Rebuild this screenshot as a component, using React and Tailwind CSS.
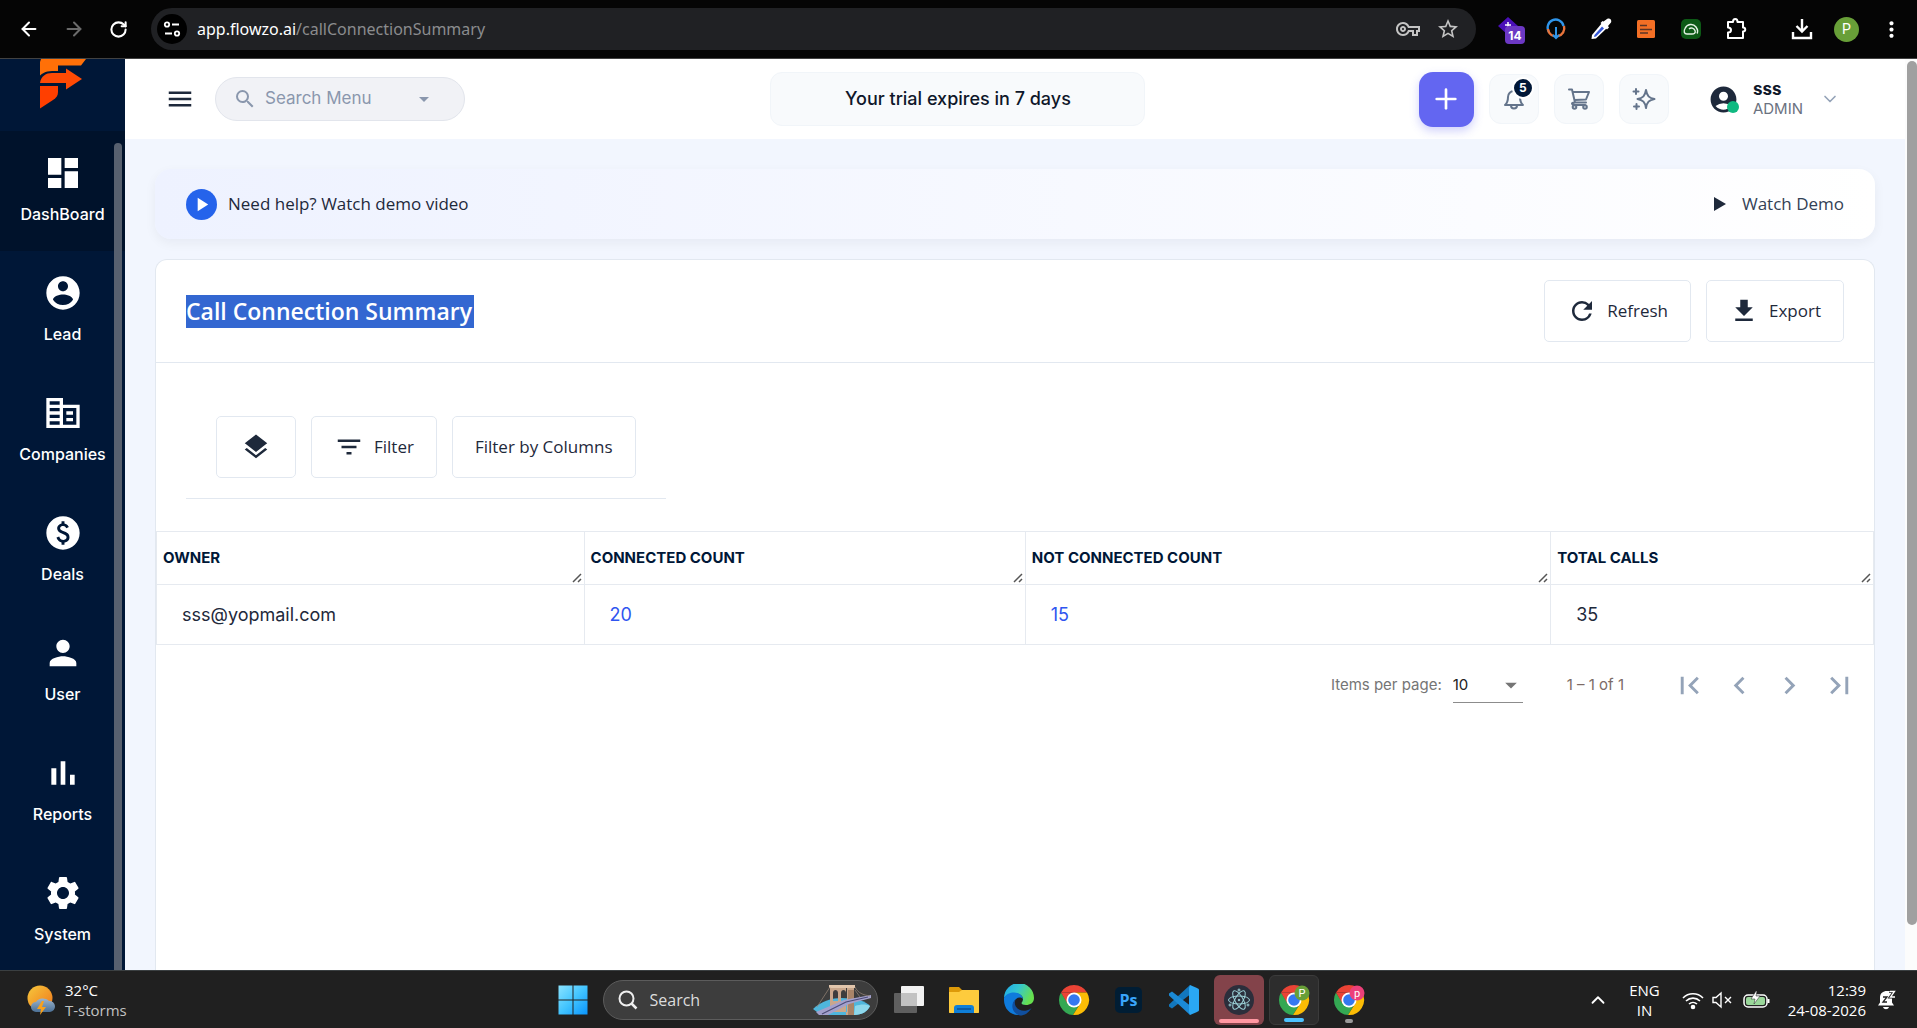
import React, { useState } from 'react';
import {
  MdArrowDropDown,
  MdChevronLeft,
  MdChevronRight,
  MdCorporateFare,
  MdDashboard,
  MdFilterList,
  MdFirstPage,
  MdGetApp,
  MdLastPage,
  MdLayers,
  MdMenu,
  MdMoreVert,
  MdOutlineVpnKey,
  MdPaid,
  MdPerson,
  MdPlayArrow,
  MdAccountCircle,
  MdRefresh,
  MdSearch,
  MdSettings,
  MdStarBorder,
} from 'react-icons/md';
import { ArrowLeft, ArrowRight, ChevronDown, ChevronUp, Plus, RotateCw } from 'lucide-react';

const LeadIcon = ({ size }) => (
  <svg width={size} height={size} viewBox="0 0 24 24" fill="currentColor">
    <path d="M12 2C6.48 2 2 6.48 2 12s4.48 10 10 10 10-4.48 10-10S17.52 2 12 2zm0 3c1.66 0 3 1.34 3 3s-1.34 3-3 3-3-1.34-3-3 1.34-3 3-3zm0 14.2c-2.5 0-4.71-1.28-6-3.22.03-1.99 4-3.08 6-3.08 1.99 0 5.97 1.09 6 3.08-1.29 1.94-3.5 3.22-6 3.22z" />
  </svg>
);

const ReportsIcon = ({ size }) => (
  <svg width={size} height={size} viewBox="0 0 24 24" fill="currentColor">
    <path d="M5 9.2h3V19H5zM10.6 5h2.8v14h-2.8zM16.200 13H19v6h-2.800z" />
  </svg>
);

const navItems = [
  { label: 'DashBoard', icon: MdDashboard, active: true },
  { label: 'Lead', icon: LeadIcon },
  { label: 'Companies', icon: MdCorporateFare },
  { label: 'Deals', icon: MdPaid },
  { label: 'User', icon: MdPerson },
  { label: 'Reports', icon: ReportsIcon },
  { label: 'System', icon: MdSettings },
];

const columns = [
  { label: 'OWNER', width: 'w-[24.9%]' },
  { label: 'CONNECTED COUNT', width: 'w-[25.7%]' },
  { label: 'NOT CONNECTED COUNT', width: 'w-[30.6%]' },
  { label: 'TOTAL CALLS', width: 'w-[18.8%]' },
];

const rows = [{ owner: 'sss@yopmail.com', connected: 20, notConnected: 15, total: 35 }];

const BarCell = ({ label, children }) => (
  <button aria-label={label} className="flex h-[42px] w-[45px] items-center justify-center">
    {children}
  </button>
);

const BrowserBar = () => (
  <div className="flex h-[59px] shrink-0 items-start border-b border-[#424242] bg-[#050505] pt-2 pr-[3px] pl-1.5 text-white">
    <BarCell label="Back"><ArrowLeft size={22} strokeWidth={2.2} /></BarCell>
    <BarCell label="Forward"><ArrowRight size={22} strokeWidth={2.2} className="text-[#6b6b6b]" /></BarCell>
    <BarCell label="Reload"><RotateCw size={19} strokeWidth={2.6} /></BarCell>
    <div className="mr-3 ml-2.5 flex h-[42px] flex-1 items-center rounded-full bg-[#202124] pl-1.5">
      <span className="flex size-[30px] items-center justify-center rounded-full bg-black">
        <svg width="18" height="18" viewBox="0 0 18 18" fill="none" stroke="#fff" strokeWidth="1.8">
          <circle cx="4" cy="4.5" r="2.2" />
          <path d="M9 4.5h7M2 13.5h7" />
          <circle cx="14" cy="13.5" r="2.2" />
        </svg>
      </span>
      <span className="ml-2.5 flex-1 font-['Noto_Sans',sans-serif] text-base text-[#8b8c8e]">
        <span className="text-white">app.flowzo.ai</span>/callConnectionSummary
      </span>
      <div className="flex gap-4 pr-4 text-[#c4c4c4]">
        <MdOutlineVpnKey size={24} />
        <MdStarBorder size={24} />
      </div>
    </div>
    <BarCell label="Tasks">
      <svg width="30" height="30" viewBox="0 0 30 30">
        <path d="M12 3l10 9-10 9-10-9z" fill="#4a0fb8" />
        <path d="M9 11h6M12 8v5" stroke="#fff" strokeWidth="1.5" />
        <rect x="9" y="12" width="20" height="18" rx="4" fill="#6c38c4" />
        <text x="19" y="26" textAnchor="middle" fontSize="12" fontWeight="700" fontFamily="Inter, sans-serif" fill="#fff">14</text>
      </svg>
    </BarCell>
    <BarCell label="Downloader">
      <svg width="22" height="22" viewBox="0 0 22 22" fill="none" strokeWidth="2.4">
        <path d="M4 14A8 8 0 1 1 18.500 8" stroke="#2f95ea" />
        <path d="M19 8a8 8 0 0 1-6 10M3 11a8 8 0 0 0 6 7" stroke="#e8743b" />
        <path d="M11 9v11M8 17l3 3 3-3" stroke="#2f95ea" strokeWidth="2" />
      </svg>
    </BarCell>
    <BarCell label="Color picker">
      <svg width="22" height="22" viewBox="0 0 22 22">
        <path d="M12 5l5 5L6 20.500 1.500 21 2 17z" fill="#fff" />
        <path d="M12 8.500l2 2-8 8-2 .5.500-2z" fill="#3558d8" />
        <path d="M13.500 3.500L17 1c3-1.500 5 1 4 3.500l-3 3.500 1 1.500-2 2-6.500-6.500 2-2z" fill="#fff" />
      </svg>
    </BarCell>
    <BarCell label="Notes">
      <svg width="18" height="18" viewBox="0 0 18 18">
        <rect width="18" height="18" rx="1.500" fill="#f36f25" />
        <path d="M3 5.500h7M3 9.500h12M3 13h8" stroke="#5a3426" strokeWidth="1.400" />
      </svg>
    </BarCell>
    <BarCell label="Mail tracker">
      <svg width="20" height="20" viewBox="0 0 20 20" fill="none" stroke="#e6f4e6" strokeWidth="1.400">
        <rect width="20" height="20" rx="5" fill="#0d5a16" stroke="none" />
        <path d="M8 10c2-2 5-1 6 1.500s-1 3.500-3 3.500H6c-3 0-3.500-3-2-5.500C6 5 12 4 15 8c2 3 2 5 1 6.500" />
      </svg>
    </BarCell>
    <BarCell label="Extensions">
      <svg width="22" height="22" viewBox="0 0 22 22" fill="none" stroke="#fff" strokeWidth="2" strokeLinejoin="round">
        <path d="M3 4h5c0-4 4.500-4 4.500 0H18v5.500c3 0 3 4 0 4V20H3v-5.500c4 0 4-5 0-5z" />
      </svg>
    </BarCell>
    <div className="w-[21px]" />
    <BarCell label="Downloads">
      <svg width="22" height="22" viewBox="0 0 22 22" fill="none" stroke="#fff" strokeWidth="2.400">
        <path d="M11 1v12M5.500 8l5.500 5.500L16.500 8M2 14v6h18v-6" />
      </svg>
    </BarCell>
    <BarCell label="Profile">
      <span className="flex size-[25px] items-center justify-center rounded-full bg-[#689f38] font-['Roboto',sans-serif] text-sm">P</span>
    </BarCell>
    <BarCell label="Menu"><MdMoreVert size={25} /></BarCell>
  </div>
);

const Sidebar = () => (
  <aside className="relative flex w-[125px] shrink-0 flex-col overflow-hidden bg-[#001737] text-white">
    <div className="flex h-[72px] shrink-0 items-start pl-[39px]">
      <svg width="47" height="50" viewBox="0 0 47 50">
        <path d="M2 0h45l-5 6.500H19V12c-9 0-13 0-18 4.500V3z" fill="#ff7008" />
        <path d="M1 24c1-7 6-10 12-10h14V9.500l16 10.500-16 10.500V24z" fill="#ff4a04" />
        <path d="M1 27h18v6c0 4-2 6-5 8L1 49.500z" fill="#ff3f00" />
      </svg>
    </div>
    <nav className="flex flex-col">
      {navItems.map(({ label, icon: Icon, active }) => (
        <a
          key={label}
          href="#"
          className={`flex h-[120px] flex-col items-center gap-[9px] pt-[22px] ${active ? 'bg-[#00122b]' : ''}`}
        >
          <Icon size={40} />
          <span className="text-base leading-6 font-medium">{label}</span>
        </a>
      ))}
    </nav>
    <div className="absolute top-[84px] right-[3px] -bottom-4 w-2 rounded-full bg-[#57606f]" />
  </aside>
);

const HeaderIcon = ({ label, children }) => (
  <button
    aria-label={label}
    className="relative flex size-[50px] items-center justify-center rounded-xl border border-[#f1f5f9] bg-[#f8fafc] text-[#64748b]"
  >
    <svg width="24" height="24" viewBox="0 0 24 24" fill="none" stroke="currentColor" strokeWidth="2" strokeLinecap="round" strokeLinejoin="round">
      {children}
    </svg>
    {label === 'Notifications' && (
      <span className="absolute top-0.5 right-1 flex size-[22px] items-center justify-center rounded-full border-2 border-white bg-[#001737] text-xs font-bold text-white">
        5
      </span>
    )}
  </button>
);

const Header = () => (
  <header className="flex h-20 shrink-0 items-center justify-between bg-white pr-[65px] pl-10">
    <div className="flex items-center gap-5">
      <button aria-label="Toggle menu" className="text-[#1e293b]"><MdMenu size={30} /></button>
      <div className="flex h-11 w-[250px] items-center rounded-full border border-[#e2e5ec] bg-[#f1f2f6] pr-7 pl-[17px] text-[#8a97ad]">
        <MdSearch size={24} className="shrink-0" />
        <input aria-label="Search Menu" placeholder="Search Menu" className="ml-2 w-full min-w-0 bg-transparent text-[17px] outline-none placeholder:text-[#8a97ad]" />
        <MdArrowDropDown size={24} className="shrink-0" />
      </div>
    </div>
    <div className="ml-8 flex h-[54px] w-[375px] items-center justify-center rounded-xl border border-[#f1f5f9] bg-[#f8fafc] text-lg font-medium text-[#0f172a]">
      Your trial expires in 7 days
    </div>
    <div className="flex items-center gap-[15px]">
      <button aria-label="Add" className="flex size-[55px] items-center justify-center rounded-[14px] bg-[#6366f1] text-white shadow-[0_4px_10px_rgba(99,102,241,0.3)]">
        <Plus size={32} strokeWidth={2} />
      </button>
      <HeaderIcon label="Notifications">
        <path d="M3 18c2.500-2 3-4 3-8a6 6 0 0 1 12 0c0 4 .5 6 3 8zM9 18.500c0 4 6 4 6 0" />
      </HeaderIcon>
      <HeaderIcon label="Cart">
        <path d="M2 2.500h3l3 13h11M6 5h16l-3 7.500-11 .5M8 15.500c-4 0-4 2 0 2.500h10" />
        <circle cx="7.500" cy="20" r="1.800" />
        <circle cx="18" cy="20" r="1.800" />
      </HeaderIcon>
      <HeaderIcon label="Assistant">
        <path d="M14 3c1 6 3 8 8.500 9-5.500 1-7.500 3-8.500 9-1-6-3-8-8.500-9C11 11 13 9 14 3zM4 2v5M1.500 4.500h5M4.500 17v5M2 19.500h5" />
      </HeaderIcon>
      <button className="ml-6 flex items-center text-left">
        <span className="relative text-[#1e293b]">
          <MdAccountCircle size={31} />
          <span className="absolute right-0 bottom-0.5 size-3 rounded-full bg-[#10b981]" />
        </span>
        <span className="ml-3.5 flex flex-col">
          <span className="text-[17px] leading-5 font-bold text-[#0f172a]">sss</span>
          <span className="text-[15px] leading-5 text-[#6b7280]">ADMIN</span>
        </span>
        <ChevronDown size={20} className="ml-[17px] text-[#94a3b8]" />
      </button>
    </div>
  </header>
);

const DemoBanner = () => (
  <section className="flex h-[70px] shrink-0 items-center justify-between rounded-2xl bg-linear-to-r from-[#eef2ff] to-white px-[31px] font-['Open_Sans',sans-serif] text-[17px] shadow-[0_4px_12px_rgba(15,23,42,0.05)]">
    <div className="flex items-center gap-[11px] font-medium text-[#1e293b]">
      <span className="flex size-[31px] items-center justify-center rounded-full bg-[#2563eb] text-white">
        <MdPlayArrow size={23} />
      </span>
      Need help? Watch demo video
    </div>
    <a href="#" className="flex items-center gap-4 text-[#334155]">
      <svg width="12" height="14" viewBox="0 0 12 14" fill="#1e293b"><path d="M0 0l12 7-12 7z" /></svg>
      Watch Demo
    </a>
  </section>
);

const OutlineButton = ({ icon: Icon, label, children }) => (
  <button
    aria-label={label}
    className={`flex h-[62px] items-center gap-2.5 rounded-[5px] border border-[#e2e8f0] bg-white font-['Open_Sans',sans-serif] text-[17px] font-medium text-[#1e293b] ${children ? 'px-[22px]' : 'px-6'}`}
  >
    {Icon && <Icon size={30} />}
    {children}
  </button>
);

const CallTable = () => (
  <table className="w-full table-fixed border-collapse text-left">
    <thead>
      <tr>
        {columns.map(({ label, width }) => (
          <th key={label} className={`${width} relative h-[53px] border border-[#e6eaf0] px-1.5 text-[15px] font-bold text-[#001737]`}>
            {label}
            <svg width="11" height="11" viewBox="0 0 11 11" className="absolute right-px bottom-px" stroke="#555" strokeWidth="1.500">
              <path d="M1 10l8-8M6 10l3-3" />
            </svg>
          </th>
        ))}
      </tr>
    </thead>
    <tbody className="text-lg text-[#1e293b]">
      {rows.map((row) => (
        <tr key={row.owner}>
          <td className="h-[60px] border border-[#e6eaf0] px-[25px]">{row.owner}</td>
          <td className="border border-[#e6eaf0] px-[25px]"><a href="#" className="text-[#2f55f0]">{row.connected}</a></td>
          <td className="border border-[#e6eaf0] px-[25px]"><a href="#" className="text-[#2f55f0]">{row.notConnected}</a></td>
          <td className="border border-[#e6eaf0] px-[25px]">{row.total}</td>
        </tr>
      ))}
    </tbody>
  </table>
);

const Paginator = () => {
  const [pageSize, setPageSize] = useState('10');

  return (
    <div className="flex h-[81px] items-center justify-end pr-2.5 text-[15px] text-[#757575]">
      <label htmlFor="page-size">Items per page:</label>
      <div className="relative mr-11 ml-[11px] flex h-[34px] w-[70px] items-center border-b border-[#8c8c8c] text-[#212121]">
        <select
          id="page-size"
          value={pageSize}
          onChange={(e) => setPageSize(e.target.value)}
          className="w-full appearance-none bg-transparent outline-none"
        >
          <option>10</option>
          <option>25</option>
          <option>50</option>
        </select>
        <MdArrowDropDown size={28} className="pointer-events-none absolute -right-0.5 text-[#757575]" />
      </div>
      <span className="mr-10 text-[#7d6b66]">1 – 1 of 1</span>
      {[['First page', MdFirstPage], ['Previous page', MdChevronLeft], ['Next page', MdChevronRight], ['Last page', MdLastPage]].map(([label, Icon]) => (
        <button key={label} aria-label={label} className="flex size-[50px] items-center justify-center text-[#94a3b8]">
          <Icon size={35} />
        </button>
      ))}
    </div>
  );
};

const SummaryCard = () => (
  <section className="min-h-0 flex-1 overflow-hidden rounded-t-xl border border-b-0 border-[#e2e8f0] bg-white">
    <div className="flex h-[103px] items-center justify-between border-b border-[#e2e8f0] px-[30px]">
      <h1 className="bg-[#3367d1] pr-0.5 font-['Open_Sans',sans-serif] text-[23px] leading-[33px] font-semibold text-white">
        Call Connection Summary
      </h1>
      <div className="flex gap-[15px]">
        <OutlineButton icon={MdRefresh}>Refresh</OutlineButton>
        <OutlineButton icon={MdGetApp}>Export</OutlineButton>
      </div>
    </div>
    <div className="mb-8 ml-[30px] inline-flex gap-[15px] border-b border-[#e2e8f0] px-[30px] pt-[53px] pb-5">
      <OutlineButton icon={MdLayers} label="Group" />
      <OutlineButton icon={MdFilterList}>Filter</OutlineButton>
      <OutlineButton>Filter by Columns</OutlineButton>
    </div>
    <CallTable />
    <Paginator />
  </section>
);

const ChromeIcon = ({ badge, color }) => (
  <svg width="32" height="32" viewBox="0 0 32 32">
    <path d="M3 8.500A15 15 0 0 1 29 8.500H16z" fill="#ea4335" />
    <path d="M3 8.500A15 15 0 0 0 15 31l7-11.500H10z" fill="#34a853" />
    <path d="M29 8.500A15 15 0 0 1 15 31l7.500-12L16 8.500z" fill="#fbbc05" />
    <path d="M3 8.500h16L9.500 19.500z" fill="#ea4335" />
    <circle cx="16" cy="16" r="7.500" fill="#fff" />
    <circle cx="16" cy="16" r="5.800" fill="#3478f0" />
    {badge && <circle cx="24" cy="9" r="7.500" fill={color} />}
    {badge && <text x="24" y="13" textAnchor="middle" fontSize="11" fontFamily="Roboto" fill="#fff">{badge}</text>}
  </svg>
);

const TaskTile = ({ label, className = '', bar, children }) => (
  <button aria-label={label} className={`relative flex size-[50px] items-center justify-center rounded-md ${className}`}>
    {children}
    {bar && <span className={`absolute bottom-0.5 h-1 rounded-full ${bar}`} />}
  </button>
);

const Taskbar = () => (
  <footer className="grid h-[58px] shrink-0 grid-cols-[1fr_auto_1fr] items-center border-t border-[#3a3f41] bg-[#202020] font-['Open_Sans',sans-serif] text-[15px] leading-5 text-white">
    <div className="flex items-center gap-[9px] pl-[26px]">
      <svg width="30" height="32" viewBox="0 0 30 32">
        <defs>
          <linearGradient id="sun" x1="0" y1="0" x2="1" y2="1">
            <stop offset="0" stopColor="#f6c83c" />
            <stop offset="1" stopColor="#f0761a" />
          </linearGradient>
          <linearGradient id="cloud" x1="0" y1="0" x2="0" y2="1">
            <stop offset="0" stopColor="#9db4cb" />
            <stop offset="1" stopColor="#4b7096" />
          </linearGradient>
        </defs>
        <circle cx="14" cy="14" r="12.500" fill="url(#sun)" />
        <path d="M10 28a5 5 0 0 1 0-10 8 7 0 0 1 13-1 5.500 5.500 0 0 1 1 11z" fill="url(#cloud)" />
        <path d="M16 17l-5 8h4l-1 6 6-8h-4l2-6z" fill="#f9a11b" />
      </svg>
      <div>
        <div>32°C</div>
        <div className="text-[#c3c3c3]">T-storms</div>
      </div>
    </div>

    <div className="flex items-center gap-[5px] pl-1">
      <TaskTile label="Start">
        <svg width="30" height="30" viewBox="0 0 30 30">
          <defs>
            <linearGradient id="win" x1="0" y1="0" x2="1" y2="1">
              <stop offset="0" stopColor="#8be4ff" />
              <stop offset="0.5" stopColor="#42c4ff" />
              <stop offset="1" stopColor="#0a94fb" />
            </linearGradient>
          </defs>
          <path d="M.5.5h14v14H.5zM15.500.5h14v14h-14zM.5 15.500h14v14H.5zM15.500 15.500h14v14h-14z" fill="url(#win)" />
        </svg>
      </TaskTile>
      <div className="mr-px flex h-10 w-[275px] items-center overflow-hidden rounded-full border border-[#5c5c5c] bg-[#3d3d3d] pr-1.5 pl-3.5">
        <svg width="20" height="20" viewBox="0 0 20 20" fill="none" stroke="#eee" strokeWidth="2" className="shrink-0">
          <circle cx="8.500" cy="8.500" r="7" />
          <path d="M13.500 13.500l5 5" strokeWidth="2.500" />
        </svg>
        <input aria-label="Search" placeholder="Search" className="ml-3 w-full min-w-0 bg-transparent text-base outline-none placeholder:text-[#dcdcdc]" />
        <svg width="58" height="32" viewBox="0 0 58 32" className="shrink-0">
          <path d="M0 25c8-8 20-11 28-11 14 0 25 3 29 8-2 5-8 9-16 9H8z" fill="#4fb6dc" />
          <path d="M42 22c6-2 11-2 15 0-2 5-8 9-16 9z" fill="#8ed8ec" />
          <path fillRule="evenodd" d="M17 2h24v29h-8V3zM17 2h17v26H17zM20 17V9c0-4 5-4 5 0v8zM28 17V9c0-4 5-4 5 0v8z" fill="#c9a78c" />
          <path d="M35 6h6v25h-6z" fill="#a98468" />
          <path d="M16 1h26v3H16z" fill="#e2c6ac" />
          <path d="M3 28l28-12 27-5v3L36 20 15 31H6z" fill="#a3a0cc" />
          <path d="M9 30l24-12 22-5" stroke="#4c4c78" strokeWidth="1.200" fill="none" />
          <path d="M17 3L4 23M42 3c3 6 8 8 15 9M42 6l5 7" stroke="#9a8778" strokeWidth="0.700" fill="none" />
        </svg>
      </div>
      <TaskTile label="Task view">
        <svg width="32" height="30" viewBox="0 0 32 30">
          <rect x="8" y="1" width="23" height="20" rx="1" fill="#f2f2f2" />
          <rect x="1" y="8" width="23" height="20" rx="1" fill="#8b8b8b" fillOpacity="0.6" />
          <rect x="8" y="8" width="16" height="13" fill="#c2c2c2" />
        </svg>
      </TaskTile>
      <TaskTile label="File Explorer">
        <svg width="32" height="28" viewBox="0 0 32 28">
          <path d="M1 2c0-1 .5-1 1-1h9l3 3v5H1z" fill="#dd9a09" />
          <path d="M1 6h10l3-2h16c1 0 1 .5 1 1v21c0 1-.5 1-1 1H2c-1 0-1-.5-1-1z" fill="#fdcb3d" />
          <path d="M6 27v-5c0-2 1-3 3-3h14c2 0 3 1 3 3v5z" fill="#0f7fd8" />
          <path d="M9 23h14" stroke="#0a4f94" strokeWidth="1.500" />
        </svg>
      </TaskTile>
      <TaskTile label="Edge">
        <svg width="32" height="32" viewBox="0 0 32 32">
          <defs>
            <linearGradient id="edgeTop" x1="0" y1="0" x2="1" y2="0.4">
              <stop offset="0" stopColor="#1ba6ee" />
              <stop offset="0.5" stopColor="#35c7cf" />
              <stop offset="1" stopColor="#66e04f" />
            </linearGradient>
          </defs>
          <path d="M1 14A15 15 0 0 1 31 14c0 5-4 7-8 7-3 0-4.500-1-4.500-2 0-.8 1.500-1.500 1.500-4 0-3-3-5.500-7-5.500-5 0-10 2-12 4.500z" fill="url(#edgeTop)" />
          <path d="M1 14c2-4 6-5.500 10-5.500 5 0 9 3 9 6.500-2-2-5-2-7.500.5-4 4-2 12 4.500 15.500C8 32 1 25 1 16z" fill="#0f7bdc" />
          <path d="M12.500 15.500c-3 7 4 12.500 11 11 2-.5 4-1.500 5-2.500-3 5-7 7.500-11.500 7.500C8 29 7.500 19 12.500 15.500z" fill="#104f9e" />
        </svg>
      </TaskTile>
      <TaskTile label="Chrome"><ChromeIcon /></TaskTile>
      <TaskTile label="Photoshop">
        <span className="flex h-[26px] w-[27px] items-center justify-center rounded-[5px] bg-[#001d34] text-base font-bold text-[#39a5fb]">Ps</span>
      </TaskTile>
      <TaskTile label="VS Code">
        <svg width="32" height="32" viewBox="0 0 32 32">
          <path d="M1 20.500L22 1l2 8L4 24.500l-3-2z" fill="#1277bd" />
          <path d="M1 11.500L22 31l2-8L4 7.500l-3 2z" fill="#1b8ad6" />
          <path d="M22 1l7 3c1 .5 2 1 2 2v20c0 1-1 1.500-2 2l-7 3-1-3V4z" fill="#2aa7f3" />
        </svg>
      </TaskTile>
      <TaskTile label="Electron" className="bg-[#83434a]" bar="w-10 bg-[#ff98a2]">
        <svg width="32" height="32" viewBox="0 0 32 32" fill="none" stroke="#9fd6dc" strokeWidth="1">
          <circle cx="16" cy="16" r="15" fill="#2b2e3b" stroke="none" />
          <ellipse cx="16" cy="16" rx="10.500" ry="4" />
          <ellipse cx="16" cy="16" rx="10.500" ry="4" transform="rotate(60 16 16)" />
          <ellipse cx="16" cy="16" rx="10.500" ry="4" transform="rotate(120 16 16)" />
          <circle cx="16" cy="16" r="0.800" fill="#9fd6dc" />
          <circle cx="16" cy="6" r="1" fill="#2b2e3b" />
          <circle cx="7" cy="21" r="1" fill="#2b2e3b" />
          <circle cx="25" cy="21" r="1" fill="#2b2e3b" />
        </svg>
      </TaskTile>
      <TaskTile label="Chrome, work profile" className="border border-[#3b3b3b] bg-[#2d2d2d]" bar="w-5 bg-[#4cc2ff]">
        <ChromeIcon badge="P" color="#689f38" />
      </TaskTile>
      <TaskTile label="Chrome, personal profile" bar="w-2 bg-[#9a9a9a]">
        <ChromeIcon badge="p" color="#ec407a" />
      </TaskTile>
    </div>

    <div className="flex items-center justify-end pr-[21px]">
      <ChevronUp size={22} className="mr-5" />
      <div className="mr-[22px] text-center">
        <div>ENG</div>
        <div>IN</div>
      </div>
      <svg width="22" height="20" viewBox="0 0 22 20" fill="none" stroke="#fff" strokeWidth="1.600" className="mr-2">
        <path d="M1 8a14 14 0 0 1 20 0M4 11a10 10 0 0 1 14 0M7 14a6 6 0 0 1 8 0" />
        <circle cx="11" cy="17" r="1.500" fill="#fff" />
      </svg>
      <svg width="21" height="18" viewBox="0 0 21 18" fill="none" stroke="#fff" strokeWidth="1.400" className="mr-2.5">
        <path d="M1 6.500h3L9 2v14l-5-4.500H1zM13 6l6 6M19 6l-6 6" />
      </svg>
      <svg width="27" height="18" viewBox="0 0 27 18" className="mr-[18px]">
        <rect x="1" y="4" width="23" height="12" rx="4" fill="#222" stroke="#fff" strokeWidth="1.500" />
        <rect x="3" y="6" width="19" height="8" rx="2" fill="#9ad79a" />
        <path d="M25.500 8v4" stroke="#fff" strokeWidth="2" />
        <path d="M13 0L8 8h4l-1 5 6-8h-4l1-5z" fill="#fff" stroke="#222" strokeWidth="0.500" />
      </svg>
      <div className="mr-[11px] text-right">
        <div>12:39</div>
        <div>24-08-2026</div>
      </div>
      <svg width="19" height="20" viewBox="0 0 19 20">
        <path d="M1 15.500l2-3V8c0-5 3-7 7-7h3l-1 2h4l-1 5v4.500l2 3zM6 17h6c-1 3-5 3-6 0z" fill="#fff" />
        <path d="M6 7h4l-4 5h4" stroke="#222" strokeWidth="1.300" fill="none" />
        <path d="M13 1.500h4.500L13.500 7h4.500" stroke="#222" strokeWidth="3" fill="none" />
        <path d="M13 1.500h4.500L13.500 7h4.500" stroke="#fff" strokeWidth="1.300" fill="none" />
      </svg>
    </div>
  </footer>
);

const App = () => {
  return (
    <div className="flex h-screen flex-col overflow-hidden font-['Inter',sans-serif]">
      <BrowserBar />
      <div className="flex min-h-0 flex-1">
        <Sidebar />
        <div className="flex min-w-0 flex-1 flex-col">
          <Header />
          <main className="flex min-h-0 flex-1 flex-col gap-5 bg-[#f2f6fe] px-[30px] pt-[30px]">
            <DemoBanner />
            <SummaryCard />
          </main>
        </div>
        <div className="flex w-3 shrink-0 justify-end bg-[#fcfcfc] pt-0.5">
          <div className="h-[95%] w-2.5 rounded-full bg-[#a0a0a0]" />
        </div>
      </div>
      <Taskbar />
    </div>
  );
};

export default App;
